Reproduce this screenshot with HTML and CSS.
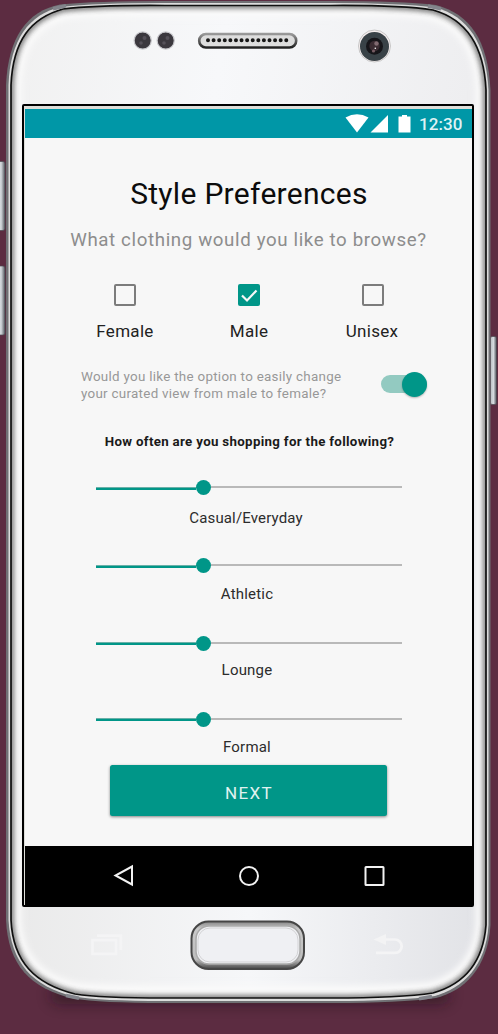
FILE: index.html
```
<!DOCTYPE html>
<html lang="en">
<head>
<meta charset="utf-8">
<title>Style Preferences</title>
<link rel="stylesheet" href="styles.css">
</head>
<body>
<div class="phone">
  <svg class="shell" viewBox="0 0 498 1034" aria-hidden="true">
    <defs>
      <linearGradient id="face" x1="0" y1="0" x2="1" y2="0.15">
        <stop offset="0" stop-color="#f0f0f0"/><stop offset=".45" stop-color="#f7f8fa"/><stop offset="1" stop-color="#ededef"/>
      </linearGradient>
      <linearGradient id="chin" x1="0" y1="0" x2="1" y2="0">
        <stop offset="0" stop-color="#e9e9e9"/><stop offset=".5" stop-color="#f6f7f9"/><stop offset="1" stop-color="#e0e1e5"/>
      </linearGradient>
      <linearGradient id="key" x1="0" y1="0" x2="1" y2="0">
        <stop offset="0" stop-color="#b9bfc3"/><stop offset=".5" stop-color="#d5dade"/><stop offset="1" stop-color="#555960"/>
      </linearGradient>
      <linearGradient id="home" x1="0" y1="0" x2="0" y2="1">
        <stop offset="0" stop-color="#858585"/><stop offset=".15" stop-color="#c9c9c9"/><stop offset=".8" stop-color="#bdbdbd"/><stop offset="1" stop-color="#444"/>
      </linearGradient>
      <linearGradient id="grille" x1="0" y1="0" x2="0" y2="1">
        <stop offset="0" stop-color="#9a9a9a"/><stop offset="1" stop-color="#222"/>
      </linearGradient>
      <filter id="soft" x="-10%" y="-10%" width="120%" height="120%"><feGaussianBlur stdDeviation="2.500"/></filter>
      <filter id="glow" x="-10%" y="-10%" width="120%" height="120%"><feGaussianBlur stdDeviation="3"/></filter>
      <filter id="drop" x="-10%" y="-100%" width="120%" height="300%"><feGaussianBlur stdDeviation="7"/></filter>
      <clipPath id="inner"><path d="M11 85C13 40 31 18 63 9Q95 5 165 5.500H331Q401 5 433 10C465 19 484 45 486 90V925C483 965 461 985 433 993Q400 998 331 998H165Q100 998 75 994C35 984 13 962 11 920Z"/></clipPath>
    </defs>
    <rect x="50" y="986" width="400" height="18" rx="9" fill="#1d0c16" opacity=".5" filter="url(#drop)"/>
    <g fill="url(#key)" stroke="#4a4a52" stroke-width=".7">
      <rect x="-3" y="161.500" width="8" height="69" rx="2"/>
      <rect x="-3" y="266" width="8" height="69" rx="2"/>
      <rect x="490.500" y="336.500" width="6" height="68" rx="1.500"/>
    </g>
    <path d="M6 85C8 38 27 11 60 4.500Q95 1 165 1H331Q401 1 436 5C470 14 488 40 490.500 90V925C488 968 464 991 436 998Q400 1003 331 1003H165Q100 1003 73 998.500C30 988 8 965 6 920Z" fill="#707074"/>
    <path d="M8.500 85C10 40 29 14 61 7Q95 3 165 3H331Q401 3 435 7.500C468 16 486 43 488.500 90V925C486 966 463 988 435 996Q400 1001 331 1001H165Q100 1001 74 996.500C32 986 11 963 8.500 920Z" fill="#dcdcdc"/>
    <g clip-path="url(#inner)">
      <rect width="498" height="500" fill="url(#face)"/>
      <rect y="500" width="498" height="534" fill="url(#chin)"/>
      <path d="M13 85C15 42 33 20 64 11Q95 7 165 8H331Q401 7 432 12C463 21 482 47 484 90V925C481 963 459 983 432 990Q400 994 331 994H165Q100 994 76 991C37 982 15 960 13 920Z" fill="none" stroke="#fafafa" stroke-width="17" filter="url(#glow)"/>
      <path d="M11 85C13 40 31 18 63 9Q95 5 165 5.500H331Q401 5 433 10C465 19 484 45 486 90V925C483 965 461 985 433 993Q400 998 331 998H165Q100 998 75 994C35 984 13 962 11 920Z" fill="none" stroke="#333" stroke-width="6" opacity=".65" filter="url(#soft)"/>
    </g>
    <path d="M11 85C13 40 31 18 63 9Q95 5 165 5.500H331Q401 5 433 10C465 19 484 45 486 90V925C483 965 461 985 433 993Q400 998 331 998H165Q100 998 75 994C35 984 13 962 11 920Z" fill="none" stroke="#101010" stroke-width="1.700"/>
    <g stroke="#83858c" stroke-width="3.500">
      <path d="M53 8.800L66 5.800M428 6L441 8.800M66 995.500L79 998.200M419 998.700L432 996.500"/>
    </g>
    <g fill="#3b383e" stroke="#c9c9cd" stroke-width="1.200">
      <circle cx="142.700" cy="40.500" r="8.600"/><circle cx="165.700" cy="40.500" r="8.600"/>
    </g>
    <g fill="#555159"><circle cx="144.500" cy="38" r="2"/><circle cx="141" cy="43" r="1.800"/><circle cx="167.500" cy="38" r="2"/><circle cx="164" cy="43" r="1.800"/></g>
    <rect x="199.200" y="34" width="97" height="13.500" rx="6.700" fill="#ddd" stroke="url(#grille)" stroke-width="2.600"/>
    <path d="M208 40.300H288" stroke="#171717" stroke-width="4" stroke-linecap="round" stroke-dasharray="0 5.590"/>
    <circle cx="374.500" cy="46" r="16" fill="#f5eeee" stroke="#bbb" stroke-width=".8"/>
    <circle cx="374.500" cy="46.500" r="14.500" fill="#394247"/>
    <circle cx="374.500" cy="46.300" r="8.500" fill="#161519"/>
    <circle cx="374.500" cy="46" r="5.200" fill="#3b2c32"/>
    <circle cx="376.500" cy="43.500" r="2.200" fill="#806a70"/><circle cx="373.500" cy="51" r="1.600" fill="#765c63"/><circle cx="375.300" cy="48.300" r=".8" fill="#fff"/>
    <rect x="191.500" y="921.500" width="112.500" height="47.500" rx="17" fill="url(#home)" stroke="#464646" stroke-width="2"/>
    <rect x="196" y="926" width="104" height="38" rx="13" fill="#eff0f3" stroke="#aaa" stroke-width="1.500"/>
    <rect x="198" y="928" width="100" height="34" rx="12" fill="none" stroke="#d3d3d5"/>
    <g fill="none" stroke="#f4f4f5" stroke-width="2.700">
      <path d="M92.500 940.200H116V953.800H92.500ZM97 935.700H120.800V950"/>
      <path d="M384 939.500H395A6.700 6.700 0 0 1 395 952.900H376"/>
    </g>
    <path d="M373.500 939.500L386 934V945Z" fill="#f3f3f4"/>
  </svg>

  <main class="screen">
    <header class="status">
      <svg class="signals" viewBox="0 0 70 20" aria-hidden="true">
        <path d="M.500 3.500Q12 -3 23.500 3.500L12 18.500Z"/><path d="M25.500 18.500H43V1Z"/><path d="M57 1h5v1.500h3.500v16h-12v-16H57Z"/>
      </svg>
      <time class="clock">12:30</time>
    </header>

    <section class="content">
      <h1 class="title">Style Preferences</h1>
      <p class="subtitle">What clothing would you like to browse?</p>

      <div class="choices">
        <label class="choice"><span class="box"></span><span class="choice-name">Female</span></label>
        <label class="choice"><span class="box checked"><svg viewBox="0 0 22 22"><path d="M4 11.500L9 16.500L18.500 6.500"/></svg></span><span class="choice-name">Male</span></label>
        <label class="choice"><span class="box"></span><span class="choice-name unisex">Unisex</span></label>
      </div>

      <div class="option">
        <p class="option-text">Would you like the option to easily change<br>your curated view from male to female?</p>
        <span class="switch"><span class="knob"></span></span>
      </div>

      <h2 class="question">How often are you shopping for the following?</h2>

      <div class="sliders">
        <div class="slider"><span class="fill"></span><span class="thumb"></span><span class="rest"></span></div>
        <p class="slider-name casual">Casual/Everyday</p>
        <div class="slider"><span class="fill"></span><span class="thumb"></span><span class="rest"></span></div>
        <p class="slider-name">Athletic</p>
        <div class="slider"><span class="fill"></span><span class="thumb"></span><span class="rest"></span></div>
        <p class="slider-name">Lounge</p>
        <div class="slider"><span class="fill"></span><span class="thumb"></span><span class="rest"></span></div>
        <p class="slider-name">Formal</p>
      </div>

      <button class="next">NEXT</button>
    </section>

    <nav class="navbar">
      <svg viewBox="0 0 24 24"><path d="M20 2.500V20.500L3.500 11.500Z"/></svg>
      <svg viewBox="0 0 24 24"><circle cx="12" cy="12" r="9"/></svg>
      <svg viewBox="0 0 24 24"><rect x="3.500" y="3" width="18" height="18" rx=".5"/></svg>
    </nav>
  </main>
</div>
</body>
</html>
```

FILE: styles.css
```
* { box-sizing: border-box; }
body { margin: 0; background: #5c2c41; font-family: Roboto, "Liberation Sans", sans-serif; }
h1, h2, p { margin: 0; font-weight: 400; }

.phone { position: relative; width: 498px; height: 1034px; padding: 104px 24px 0 22px; overflow: hidden; }
.shell { position: absolute; inset: 0; width: 498px; height: 1034px; }

.screen {
  position: relative;
  width: 452px; height: 803px;
  display: flex; flex-direction: column;
  border: 2px solid #000; border-radius: 2px;
  padding: 3px 0 0 1px;
  background: #deded9;
  overflow: hidden;
}
.status {
  display: flex; align-items: center; justify-content: flex-end;
  height: 29px; width: 447px; padding-right: 8px;
  background: #0097a7; color: #dff2f4;
}
.signals { width: 70px; height: 20px; fill: #fff; margin-right: 4px; }
.clock { width: 45px; font-size: 17px; font-weight: 500; line-height: 20px; letter-spacing: .1px; white-space: nowrap; padding-top: 1px; }

.content {
  display: flex; flex-direction: column;
  width: 447px; height: 708px;
  padding-top: 36px;
  background: #f7f7f7;
}
.title { height: 40px; padding-left: 1px; text-align: center; font-size: 30px; line-height: 40px; letter-spacing: .3px; color: #0c0c0c; white-space: nowrap; }
.subtitle { height: 24px; margin-top: 14px; text-align: center; font-size: 18.700px; line-height: 24px; letter-spacing: .63px; color: #8d8d8d; white-space: nowrap; }

.choices { display: grid; grid-template-columns: repeat(3, 124px); margin: 32px 0 0 38px; }
.choice { display: flex; flex-direction: column; align-items: center; }
.box { width: 22px; height: 22px; border: 2px solid #7c7c7c; border-radius: 2px; }
.box.checked { border: 0; background: #009688; }
.box svg { display: block; width: 22px; height: 22px; fill: none; stroke: #f7f7f7; stroke-width: 2.200; }
.choice-name { margin-top: 15px; font-size: 17px; line-height: 20px; letter-spacing: .3px; color: #222; }
.choice-name.unisex { padding-right: 2px; }

.option { display: flex; height: 34px; margin: 28px 45px 0 56px; justify-content: space-between; align-items: flex-start; }
.option-text { font-size: 13.400px; line-height: 16.500px; letter-spacing: .28px; color: #989898; white-space: nowrap; }
.switch { display: flex; align-items: center; justify-content: flex-end; width: 46px; height: 18px; margin-top: 6px; border-radius: 9px; background: #93cac1; }
.knob { flex: none; width: 25px; height: 25px; border-radius: 50%; background: #009688; box-shadow: 0 1px 2px #0004; }

.question { height: 20px; margin-top: 29px; padding-left: 2px; text-align: center; font-size: 13.300px; line-height: 20px; font-weight: 700; letter-spacing: .32px; color: #1a1a1a; white-space: nowrap; }

.sliders { display: grid; grid-template-rows: 30.500px 47.500px 28.500px 49px 27px 49px 28px 20px; margin-top: 25.500px; width: 447px; }
.slider { display: flex; align-items: center; height: 20px; margin-left: 71px; width: 306px; }
.fill { width: 99.500px; height: 3px; background: #009688; border-top: 1px solid #6bb0a8; margin-top: 1px; }
.thumb { width: 15px; height: 15px; border-radius: 50%; background: #009688; }
.rest { flex: 1; height: 2px; background: #b9b9b9; margin-top: -1px; }
.slider-name { text-align: center; width: 444px; font-size: 15px; line-height: 20px; letter-spacing: .2px; color: #2c2c2c; }
.slider-name.casual { width: 442px; letter-spacing: .15px; }

.next {
  width: 277px; height: 51px; margin: 8px 0 0 85px; padding: 4px 0 0 1px;
  border: 0; border-radius: 2.500px;
  background: #009688; color: #e0f2f0;
  font: 400 17px/20px Roboto, "Liberation Sans", sans-serif; letter-spacing: 1.400px;
  box-shadow: 0 1px 3px #0007;
}
.navbar { flex: 1; display: grid; grid-template-columns: repeat(3, 125px); padding-left: 36px; align-items: center; justify-items: center; background: #000; }
.navbar svg { width: 24px; height: 24px; fill: none; stroke: #f2f2f2; stroke-width: 2; }
```
